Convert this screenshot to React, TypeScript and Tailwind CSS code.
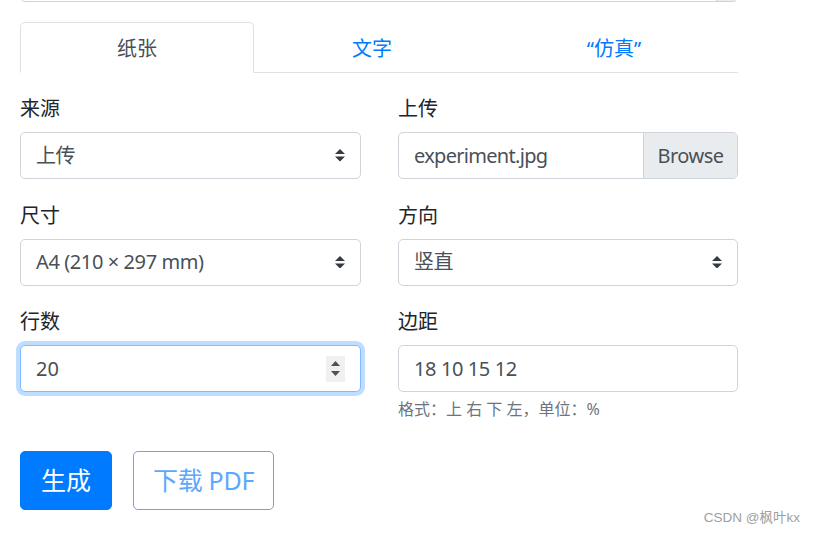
import React from "react";

const font = { fontFamily: '"Segoe UI", "Noto Sans", "Noto Sans CJK SC", sans-serif' };

function SelectArrow() {
  return (
    <svg width="10" height="12.5" viewBox="0 0 4 5" className="shrink-0">
      <path d="M2 0L0 2h4zm0 5L0 3h4z" fill="#343a40" />
    </svg>
  );
}

function Select({ value }: { value: string }) {
  return (
    <div className="h-[47px] border border-[#ced4da] rounded-[5px] pl-[15px] pr-[15px] flex items-center justify-between text-[20px] leading-[30px] text-[#495057] bg-white">
      <span className="tracking-[-0.4px]">{value}</span>
      <SelectArrow />
    </div>
  );
}

function Label({ children }: { children: React.ReactNode }) {
  return <div className="text-[20px] leading-[30px] text-[#212529] pt-[2px] mb-[8px]">{children}</div>;
}

export default function App() {
  return (
    <div
      className="w-[815px] h-[534px] bg-white relative overflow-hidden"
      style={font}
    >
      <div className="ml-[20px] w-[718px]">
        <div className="-mt-[45px] h-[47px] border border-[#ced4da] rounded-[5px] flex overflow-hidden">
          <div className="flex-1" />
          <div className="w-[21px] bg-[#e9ecef] border-l border-[#ced4da]" />
        </div>

        <div className="mt-[20px] flex border-b border-[#dee2e6] text-[20px] leading-[30px]">
          <div className="w-[234px] -mb-px border border-[#dee2e6] border-b-white rounded-t-[5px] bg-white pt-[11px] pb-[7px] text-center text-[#495057]">
            纸张
          </div>
          <div className="w-[236px] pt-[11px] pb-[7px] border border-transparent text-center text-[#007bff]">文字</div>
          <div className="flex-1 pt-[11px] pb-[7px] border border-transparent text-center text-[#007bff]">“仿真”</div>
        </div>

        <div className="mt-[19px] grid grid-cols-[341px_340px] gap-x-[37px]">
          <div className="mb-[19.5px]">
            <Label>来源</Label>
            <Select value="上传" />
          </div>
          <div className="mb-[19.5px]">
            <Label>上传</Label>
            <div className="h-[47px] border border-[#ced4da] rounded-[5px] flex overflow-hidden text-[20px] leading-[30px] text-[#495057]">
              <div className="flex-1 pl-[15px] flex items-center tracking-[-0.7px]">experiment.jpg</div>
              <div className="w-[94px] bg-[#e9ecef] border-l border-[#ced4da] flex items-center justify-center tracking-[-0.5px]">
                Browse
              </div>
            </div>
          </div>

          <div className="mb-[19.5px]">
            <Label>尺寸</Label>
            <Select value="A4 (210 × 297 mm)" />
          </div>
          <div className="mb-[19.5px]">
            <Label>方向</Label>
            <Select value="竖直" />
          </div>

          <div className="mb-[20px]">
            <Label>行数</Label>
            <div className="h-[47px] border border-[#80bdff] rounded-[5px] shadow-[0_0_0_4px_rgba(0,123,255,0.25)] pl-[15px] pr-[15px] flex items-center justify-between text-[20px] leading-[30px] text-[#495057] bg-white">
              <span>20</span>
              <div className="w-[19px] h-[26px] bg-[#f0f0f0] flex flex-col items-center justify-center gap-[5px]">
                <svg width="9" height="5" viewBox="0 0 9 5">
                  <path d="M4.5 0L9 5H0z" fill="#505050" />
                </svg>
                <svg width="9" height="5" viewBox="0 0 9 5">
                  <path d="M0 0h9L4.5 5z" fill="#505050" />
                </svg>
              </div>
            </div>
          </div>
          <div className="mb-[20px]">
            <Label>边距</Label>
            <div className="h-[47px] border border-[#ced4da] rounded-[5px] pl-[15px] flex items-center text-[20px] leading-[30px] text-[#495057] bg-white tracking-[-0.4px]">
              18 10 15 12
            </div>
            <div className="mt-[5px] text-[16px] leading-[24px] text-[#6c757d]">格式：上 右 下 左，单位：%</div>
          </div>
        </div>

        <div className="mt-[10px] flex gap-[21px]">
          <div className="h-[59px] px-[20px] rounded-[5px] bg-[#007bff] border border-[#007bff] text-white text-[25px] leading-[37px] flex items-center">
            生成
          </div>
          <div className="h-[59px] px-[19px] rounded-[5px] border border-[#5aa9ff] text-[#5aa9ff] bg-white text-[25px] leading-[37px] flex items-center tracking-[-0.3px]">
            下载 PDF
          </div>
        </div>
      </div>

      <div
        className="absolute right-[15px] top-[509px] text-[13.5px] leading-[18px] text-[#a0a0a0]"
        style={{ fontFamily: '"Liberation Sans", "Noto Sans CJK SC", sans-serif' }}
      >
        CSDN @枫叶kx
      </div>
    </div>
  );
}
